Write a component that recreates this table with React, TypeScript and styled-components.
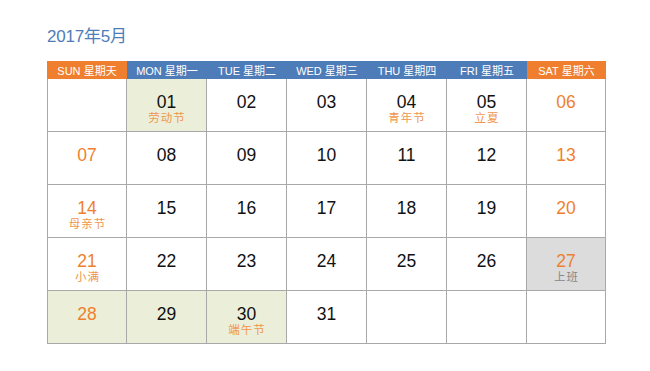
import React from "react";
import styled, { createGlobalStyle } from "styled-components";

const ORANGE = "#ef7f2e";
const BLUE = "#4e7cb8";

interface DayTypes {
  day?: string;
  note?: string;
  weekend?: boolean;
  tone?: "green" | "gray";
}

const heads = [
  { en: "SUN", cn: "星期天", weekend: true },
  { en: "MON", cn: "星期一" },
  { en: "TUE", cn: "星期二" },
  { en: "WED", cn: "星期三" },
  { en: "THU", cn: "星期四" },
  { en: "FRI", cn: "星期五" },
  { en: "SAT", cn: "星期六", weekend: true },
];

const days: DayTypes[] = [
  {},
  { day: "01", note: "劳动节", tone: "green" },
  { day: "02" },
  { day: "03" },
  { day: "04", note: "青年节" },
  { day: "05", note: "立夏" },
  { day: "06", weekend: true },
  { day: "07", weekend: true },
  { day: "08" },
  { day: "09" },
  { day: "10" },
  { day: "11" },
  { day: "12" },
  { day: "13", weekend: true },
  { day: "14", note: "母亲节", weekend: true },
  { day: "15" },
  { day: "16" },
  { day: "17" },
  { day: "18" },
  { day: "19" },
  { day: "20", weekend: true },
  { day: "21", note: "小满", weekend: true },
  { day: "22" },
  { day: "23" },
  { day: "24" },
  { day: "25" },
  { day: "26" },
  { day: "27", note: "上班", weekend: true, tone: "gray" },
  { day: "28", weekend: true, tone: "green" },
  { day: "29", tone: "green" },
  { day: "30", note: "端午节", tone: "green" },
  { day: "31" },
  {},
  {},
  {},
];

const App: React.FC = () => {
  return (
    <>
      <GlobalStyle />
      <Page>
        <Title>2017年5月</Title>
        <Calendar>
          {heads.map((h) => (
            <Head key={h.en} weekend={h.weekend}>
              {h.en} {h.cn}
            </Head>
          ))}
          {days.map((d, i) => (
            <Cell key={i} tone={d.tone}>
              {d.day && <Num weekend={d.weekend}>{d.day}</Num>}
              {d.note && <Note gray={d.tone === "gray"}>{d.note}</Note>}
            </Cell>
          ))}
        </Calendar>
      </Page>
    </>
  );
};

export default App;

const GlobalStyle = createGlobalStyle`
  body {
    margin: 0;
    background: #fff;
    font-family: "Liberation Sans", "Noto Sans CJK SC", sans-serif;
  }
`;

const Page = styled.div`
  width: 650px;
  height: 371px;
  padding: 27px 0 0 47px;
  box-sizing: border-box;
`;

const Title = styled.div`
  font-size: 17px;
  line-height: 20px;
  color: ${BLUE};
  height: 34px;
  letter-spacing: -0.2px;
`;

const Calendar = styled.div`
  display: grid;
  grid-template-columns: repeat(6, 80px) 79px;
  grid-template-rows: 18px repeat(5, 53px);
  width: 559px;
`;

const Head = styled.div<{ weekend?: boolean }>`
  background: ${(p) => (p.weekend ? ORANGE : BLUE)};
  color: #fff;
  font-size: 11px;
  display: flex;
  align-items: center;
  justify-content: center;
  white-space: nowrap;
`;

const Cell = styled.div<{ tone?: "green" | "gray" }>`
  background: ${(p) =>
    p.tone === "green" ? "#ebefda" : p.tone === "gray" ? "#dcdcdc" : "#fff"};
  border-right: 1px solid #a8a8a8;
  border-bottom: 1px solid #a8a8a8;
  display: flex;
  flex-direction: column;
  align-items: center;
  padding-top: 13px;
  box-sizing: border-box;
  &:nth-child(7n + 1) {
    border-left: 1px solid #a8a8a8;
  }
`;

const Num = styled.div<{ weekend?: boolean }>`
  font-size: 17.5px;
  line-height: 20px;
  color: ${(p) => (p.weekend ? ORANGE : "#111")};
`;

const Note = styled.div<{ gray?: boolean }>`
  font-size: 11.5px;
  line-height: 14px;
  letter-spacing: 1px;
  margin-right: -1px;
  margin-top: -1px;
  color: ${(p) => (p.gray ? "#888" : "#f0964d")};
`;
